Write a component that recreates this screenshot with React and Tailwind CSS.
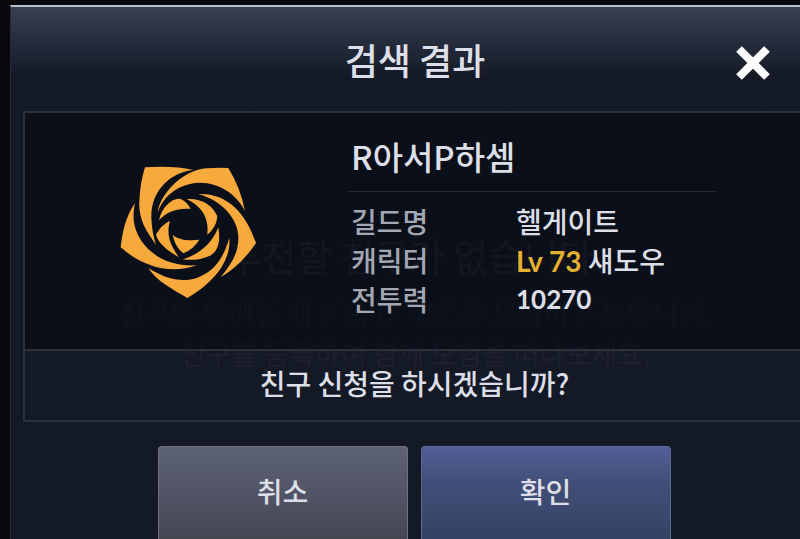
import { useState } from "react";

const profile = {
  name: "R아서P하셈",
  guild: "헬게이트",
  level: 73,
  job: "섀도우",
  power: 10270,
};

function GuildEmblem() {
  return (
    <svg viewBox="30 34 411 399" className="w-[137px] shrink-0 fill-[#f7a93b]" role="img" aria-label="길드 문장">
      <path d="M105 38Q190 32 250 46C185 52 122 105 124 190Q126 235 138 270C105 225 85 190 88 140Q90 85 105 38Z" />
      <path d="M355 40Q392 100 405 170C380 115 310 72 240 88C190 100 160 130 143 172C152 115 220 46 290 41Q325 38 355 40Z" />
      <path d="M265 118C350 115 405 170 438 265Q395 330 332 368C370 320 386 290 385 245C383 190 335 138 265 118Z" />
      <path d="M358 250C364 320 310 385 232 430C190 405 140 380 115 340C165 372 215 385 260 370C315 350 340 310 358 250Z" />
      <path d="M75 145C45 190 38 230 32 278C90 330 175 363 260 332C190 336 130 310 95 260C70 220 66 190 75 145Z" />
      <path d="M147 197C155 155 190 128 212 133Q232 142 242 163C205 160 172 170 147 197Z" />
      <path d="M230 133C280 130 310 155 322 185Q320 218 292 240C298 190 275 155 230 133Z" />
      <path d="M325 218C332 260 325 290 300 303Q262 320 218 314C265 300 305 270 325 218Z" />
      <path d="M188 240C208 258 240 258 268 255Q252 282 220 296Q194 275 188 240Z" />
      <path d="M180 198C168 240 180 270 207 308C170 286 145 265 138 240Q152 212 180 198Z" />
    </svg>
  );
}

export default function App() {
  const [open, setOpen] = useState(true);
  const close = () => setOpen(false);

  return (
    <div className="h-screen overflow-hidden bg-[#08080d] pt-[5px] pl-[10px] font-['Noto_Sans_CJK_KR',sans-serif] font-medium text-[#dcdfe8]">
      {open && (
        <div role="dialog" aria-labelledby="title" className="relative flex h-full flex-col border-t-2 border-l border-t-[#b9bfca] border-l-[#232a3a] bg-[#141926] bg-linear-to-b from-[#384052] from-0% via-[#222a39] via-[40px] to-[#141926] to-[70px]">
          <header className="grid h-[104px] shrink-0 grid-cols-[1fr_auto_1fr] items-center pt-2 pr-[29px] pl-12">
            <h1 id="title" className="col-start-2 pb-2 text-[36px] leading-none">검색 결과</h1>
            <button type="button" aria-label="닫기" onClick={close} className="justify-self-end">
              <svg viewBox="0 0 36 36" className="size-9 stroke-white stroke-[8]">
                <path d="M4 4L32 32M32 4L4 32" />
              </svg>
            </button>
          </header>

          {/* 뒤에 비치는 친구 목록 안내문 */}
          <div aria-hidden="true" className="pointer-events-none absolute inset-x-0 top-[222px] pl-5 text-center text-[28px] leading-10 text-white/3">
            <p className="mb-3 text-[38px] leading-[52px] text-white/6">추천할 친구가 없습니다.</p>
            <p>친구와 함께일 때 더욱 더 새로운 모험이 가능합니다.</p>
            <p>친구를 등록하여 함께 모험을 떠나보세요.</p>
          </div>

          <main className="relative ml-[12px] shrink-0 border-y-2 border-l-2 border-[#2b303d]">
            <section className="flex h-[236px] bg-[#00050e]/50 pt-5 pl-[95px]">
              <div className="mt-[33px] w-[227px] shrink-0">
                <GuildEmblem />
              </div>
              <div className="mr-[83px] grow">
                <h2 className="mb-2.5 border-b border-[#222732] px-1 pb-3 text-[33px] leading-[46px]">{profile.name}</h2>
                <dl className="grid auto-rows-[39px] grid-cols-[165px_1fr] px-1 text-[28px] leading-[39px]">
                  <dt className="text-[#a3a7b3]">길드명</dt>
                  <dd>{profile.guild}</dd>
                  <dt className="text-[#a3a7b3]">캐릭터</dt>
                  <dd>
                    <span className="font-[Lato] font-bold text-[#e3b02f]">Lv {profile.level}</span> {profile.job}
                  </dd>
                  <dt className="text-[#a3a7b3]">전투력</dt>
                  <dd className="font-[Lato] text-[26px] font-bold">{profile.power}</dd>
                </dl>
              </div>
            </section>
            <p className="border-t-2 border-[#2b303d] pt-2.5 pb-3.5 pl-1 text-center text-[28px] leading-[45px]">친구 신청을 하시겠습니까?</p>
          </main>

          <footer className="mt-6 flex grow justify-center gap-[13px] pl-[17px] text-[28px] [text-shadow:2px_2px_2px_#1a1d28]">
            <button type="button" onClick={close} className="w-[250px] rounded-t-sm border border-b-0 border-[#6d7180] bg-linear-to-b from-[#5e6378] to-[#444652] pb-1">
              취소
            </button>
            <button type="button" onClick={close} className="w-[250px] rounded-t-sm border border-b-0 border-[#5b6894] bg-linear-to-b from-[#515f98] via-[#414e78] via-40% to-[#364263] pb-1">
              확인
            </button>
          </footer>
        </div>
      )}
    </div>
  );
}
